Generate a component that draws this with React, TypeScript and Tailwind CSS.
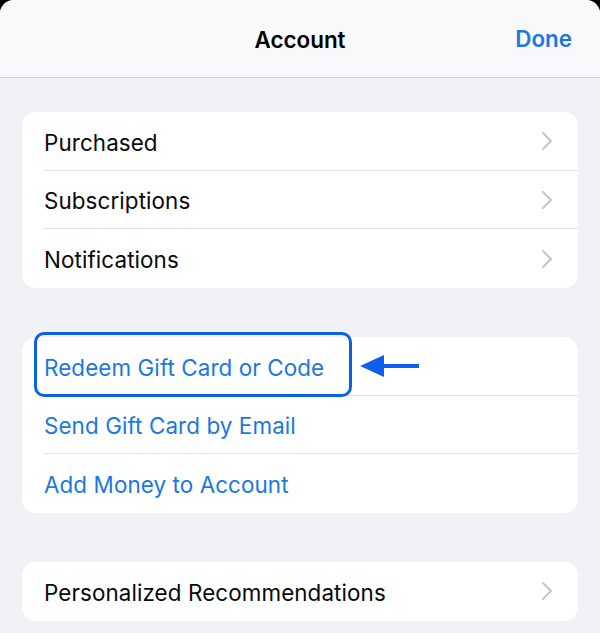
import React from "react";

const Chevron = () => (
  <svg width="14" height="22" viewBox="0 0 14 22" className="shrink-0">
    <path d="M3 3 L11 11 L3 19" fill="none" stroke="#c4c4c8" strokeWidth="2" strokeLinecap="round" strokeLinejoin="round" />
  </svg>
);

const Row = ({ label, blue, last, chevron }: { label: string; blue?: boolean; last?: boolean; chevron?: boolean }) => (
  <div className="flex h-[58.7px] pl-[22px]">
    <div className={`flex flex-1 items-center justify-between pr-[24px] ${last ? "" : "border-b border-[#e3e3e7]"}`}>
      <span className={`pt-[3px] text-[22.4px] tracking-[0.1px] ${blue ? "text-[#1a78e0]" : "text-[#0a0a0a]"}`}>{label}</span>
      {chevron && <Chevron />}
    </div>
  </div>
);

export default function App() {
  return (
    <div className="w-[600px] h-[633px] bg-black overflow-hidden" style={{ fontFamily: "Inter, 'Noto Sans', sans-serif" }}>
      <div className="h-full rounded-t-[14px] bg-[#f1f1f6] overflow-hidden">
        <div className="relative h-[78px] bg-[#f9f9fb] border-b border-[#d0d0d4] flex items-center justify-center">
          <span className="pt-[2px] text-[22.4px] font-semibold text-black">Account</span>
          <span className="absolute right-[28px] top-[22px] text-[22.4px] font-semibold text-[#1a78e0]">Done</span>
        </div>
        <div className="px-[22px] pt-[34px] flex flex-col">
          <div className="bg-white rounded-[14px] overflow-hidden">
            <Row label="Purchased" chevron />
            <Row label="Subscriptions" chevron />
            <Row label="Notifications" chevron last />
          </div>
          <div className="relative mt-[49px] bg-white rounded-[14px]">
            <Row label="Redeem Gift Card or Code" blue />
            <Row label="Send Gift Card by Email" blue />
            <Row label="Add Money to Account" blue last />
            <div className="absolute left-[12px] top-[-5px] w-[318px] h-[65px] border-[3.5px] border-[#0b60ee] rounded-[10px]" />
            <svg className="absolute left-[336px] top-[14px]" width="62" height="30" viewBox="0 0 62 30">
              <path d="M2 15 L26 4 L26 26 Z" fill="#0b60ee" />
              <rect x="24" y="13" width="37" height="4" fill="#0b60ee" />
            </svg>
          </div>
          <div className="mt-[49px] bg-white rounded-[14px] overflow-hidden">
            <Row label="Personalized Recommendations" chevron last />
          </div>
        </div>
      </div>
    </div>
  );
}
